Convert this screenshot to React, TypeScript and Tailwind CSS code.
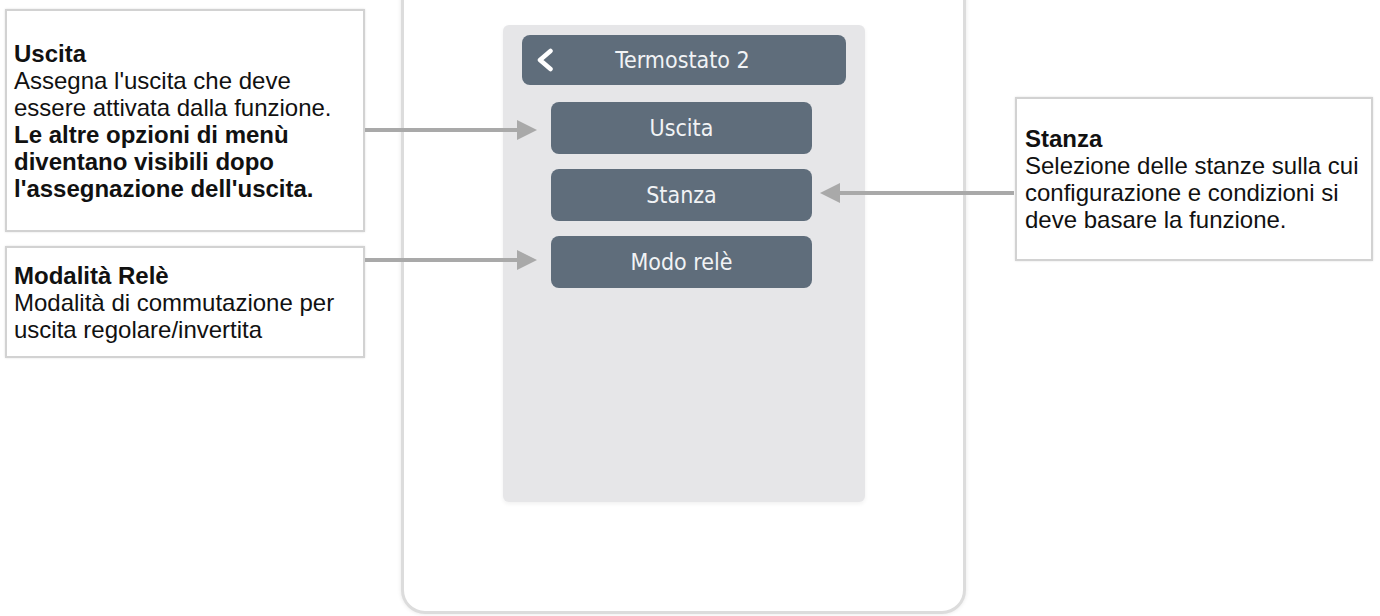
import type { ReactNode } from 'react'

function Callout({ className, children }: { className: string; children: ReactNode }) {
  return (
    <div
      className={`flex flex-col justify-center border-2 border-[#d2d2d2] bg-white px-[7px] shadow-[0_0_2px_rgba(0,0,0,0.12)] ${className}`}
    >
      {children}
    </div>
  )
}

// connector arrow, drawn over the diagram
function Arrow({ left, top, width, dir }: { left: number; top: number; width: number; dir: 'right' | 'left' }) {
  const head = 20
  return (
    <svg
      className="absolute"
      style={{ left, top }}
      width={width}
      height={20}
      viewBox={`0 0 ${width} 20`}
    >
      {dir === 'right' ? (
        <>
          <rect x={0} y={8} width={width - head} height={4} fill="#a9a9a9" />
          <polygon points={`${width - head},0 ${width},10 ${width - head},20`} fill="#a9a9a9" />
        </>
      ) : (
        <>
          <rect x={head} y={8} width={width - head} height={4} fill="#a9a9a9" />
          <polygon points={`${head},0 0,10 ${head},20`} fill="#a9a9a9" />
        </>
      )}
    </svg>
  )
}

function MenuButton({ label }: { label: string }) {
  return (
    <div className="w-[261px] h-[52px] rounded-[8px] bg-[#5f6d7b] flex items-center justify-center text-[#f1f3f5] text-[23px] font-['DejaVu_Sans_Condensed','DejaVu_Sans',sans-serif] leading-none">
      {label}
    </div>
  )
}

export default function App() {
  return (
    <div className="relative w-[1380px] h-[616px] overflow-hidden bg-white flex items-start font-['Liberation_Sans',Arial,sans-serif] text-[24px] leading-[27px] text-[#111]">
      {/* Left callouts */}
      <div className="flex flex-col gap-[14px] pl-[5px] pt-[9px] w-[365px] shrink-0">
        <Callout className="w-[360px] h-[223px]">
          <p className="font-bold">Uscita</p>
          <p>
            Assegna l'uscita che deve
            <br />
            essere attivata dalla funzione.
          </p>
          <p className="font-bold whitespace-nowrap">
            Le altre opzioni di menù
            <br />
            diventano visibili dopo
            <br />
            l'assegnazione dell'uscita.
          </p>
        </Callout>
        <Callout className="w-[360px] h-[112px]">
          <p className="font-bold">Modalità Relè</p>
          <p className="whitespace-nowrap">
            Modalità di commutazione per
            <br />
            uscita regolare/invertita
          </p>
        </Callout>
      </div>

      {/* Device frame */}
      <div className="ml-[36px] -mt-[30px] w-[565px] h-[644px] shrink-0 rounded-[24px] border-[3px] border-[#dcdcdc] bg-white shadow-[0_0_4px_rgba(0,0,0,0.1)] flex flex-col items-center pt-[52px]">
        <div className="w-[362px] h-[477px] rounded-[6px] bg-[#e6e6e8] shadow-[0_2px_4px_rgba(0,0,0,0.06)] flex flex-col items-center pt-[10px]">
          <div className="w-[324px] h-[50px] rounded-[8px] bg-[#5f6d7b] flex items-center pl-[13px] pr-[15px] text-[#f1f3f5]">
            <svg width="20" height="24" viewBox="0 0 20 24" className="shrink-0">
              <path d="M15.5 3 L5 12 L15.5 21" fill="none" stroke="#ffffff" strokeWidth="4.5" strokeLinecap="round" strokeLinejoin="round" />
            </svg>
            <span className="flex-1 text-center pr-[20px] text-[23px] leading-none font-['DejaVu_Sans_Condensed','DejaVu_Sans',sans-serif]">
              Termostato 2
            </span>
          </div>
          <div className="mt-[17px] flex flex-col gap-[15px] -ml-[4px]">
            <MenuButton label="Uscita" />
            <MenuButton label="Stanza" />
            <MenuButton label="Modo relè" />
          </div>
        </div>
      </div>

      {/* Right callout */}
      <div className="ml-[49px] mt-[97px]">
        <Callout className="w-[358px] h-[164px] px-[8px]">
          <p className="font-bold">Stanza</p>
          <p className="whitespace-nowrap">
            Selezione delle stanze sulla cui
            <br />
            configurazione e condizioni si
            <br />
            deve basare la funzione.
          </p>
        </Callout>
      </div>

      <Arrow left={365} top={120} width={172} dir="right" />
      <Arrow left={365} top={250} width={172} dir="right" />
      <Arrow left={820} top={183} width={194} dir="left" />
    </div>
  )
}
